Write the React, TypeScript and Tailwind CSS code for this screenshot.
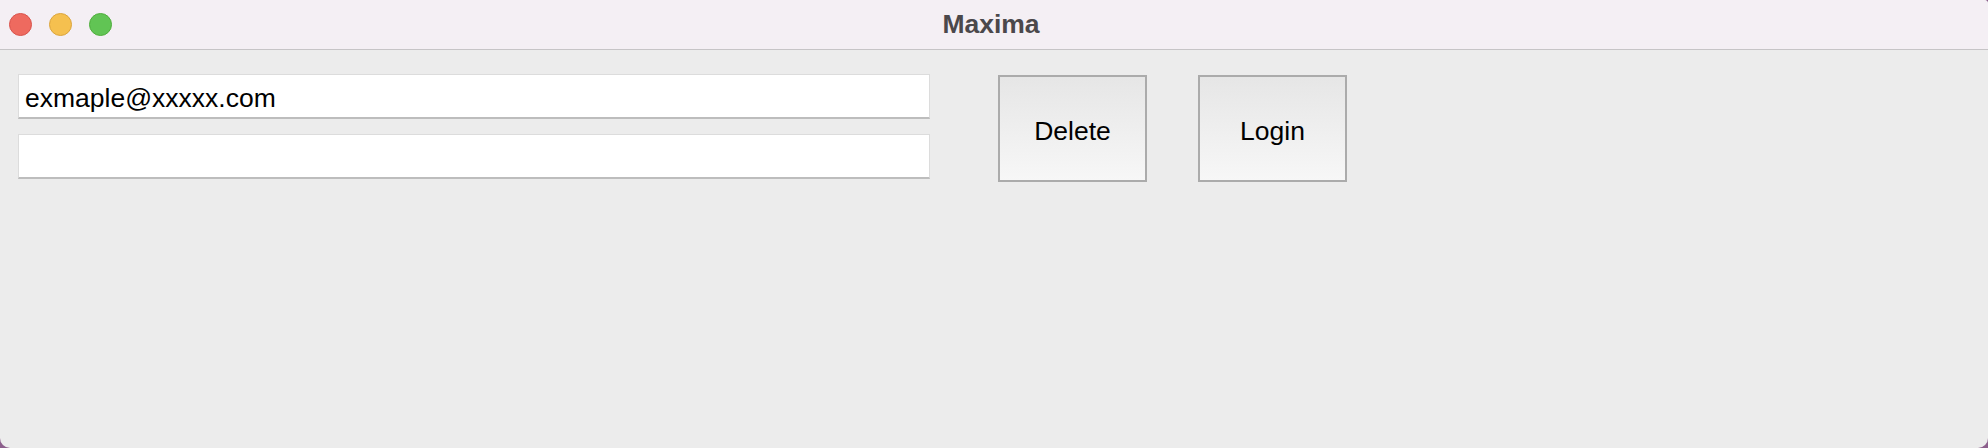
import React, { useState } from 'react';

const FONT = '"Liberation Sans", Arial, Helvetica, sans-serif';

function TrafficLights() {
  return (
    <div className="flex items-center gap-[17px] pl-[9px]">
      <span className="h-[23px] w-[23px] rounded-full border border-[#d9534c] bg-[#ee6a5f]" />
      <span className="h-[23px] w-[23px] rounded-full border border-[#dba53d] bg-[#f5c04f]" />
      <span className="h-[23px] w-[23px] rounded-full border border-[#4fae3c] bg-[#61c454]" />
    </div>
  );
}

export default function App() {
  const [email, setEmail] = useState('exmaple@xxxxx.com');
  const [password, setPassword] = useState('');

  return (
    <div className="h-[448px] w-[1988px] bg-[#8c5f8c]" style={{ fontFamily: FONT }}>
      <div className="flex h-full w-full flex-col overflow-hidden rounded-tr-[4px] rounded-b-[10px] bg-[#ececec]">
        {/* Title bar */}
        <div className="relative flex h-[50px] shrink-0 items-center border-b border-[#c6c4c6] bg-[#f4eff4]">
          <TrafficLights />
          <div className="absolute inset-0 flex items-center justify-center pointer-events-none">
            <span className="pr-[6px] text-[26.5px] font-bold leading-none text-[#4b484b]">Maxima</span>
          </div>
        </div>

        {/* Content */}
        <div className="flex items-start pl-[18px] pt-[24px]">
          <div className="flex w-[912px] flex-col gap-[15px]">
            <input
              type="text"
              value={email}
              onChange={e => setEmail(e.target.value)}
              className="h-[45px] w-full border border-[#dcdcdc] border-b-2 border-b-[#bdbdbd] bg-white pl-[6px] pt-[4px] text-[26.5px] text-black outline-none"
              style={{ fontFamily: FONT }}
            />
            <input
              type="password"
              value={password}
              onChange={e => setPassword(e.target.value)}
              className="h-[45px] w-full border border-[#dcdcdc] border-b-2 border-b-[#bdbdbd] bg-white pl-[6px] pt-[4px] text-[26.5px] text-black outline-none"
              style={{ fontFamily: FONT }}
            />
          </div>

          <div className="ml-[68px] mt-[1px] flex gap-[51px]">
            <button
              type="button"
              className="h-[107px] w-[149px] border-2 border-[#ababab] bg-gradient-to-b from-[#e6e6e6] to-[#f7f7f7] pt-[6px] text-[26.5px] text-black"
            >
              Delete
            </button>
            <button
              type="button"
              className="h-[107px] w-[149px] border-2 border-[#ababab] bg-gradient-to-b from-[#e6e6e6] to-[#f7f7f7] pt-[6px] text-[26.5px] text-black"
            >
              Login
            </button>
          </div>
        </div>
      </div>
    </div>
  );
}
